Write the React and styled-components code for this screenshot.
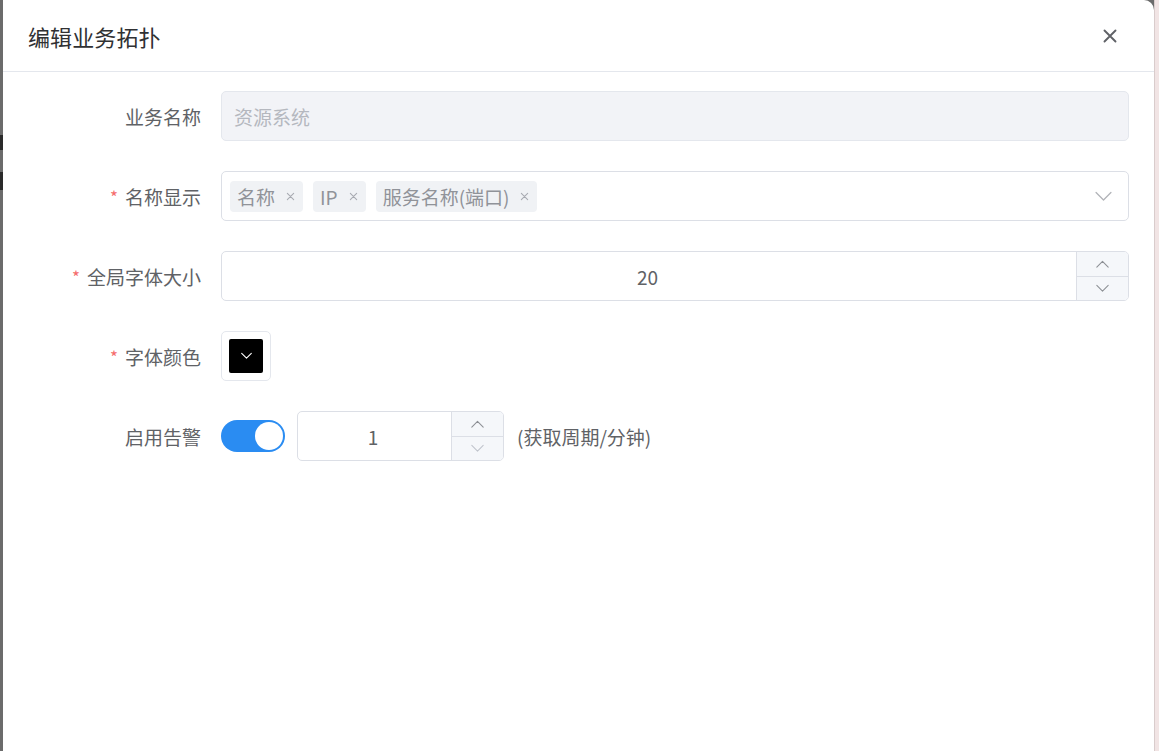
import React from 'react';
import styled, { createGlobalStyle } from 'styled-components';

const GlobalStyle = createGlobalStyle`
  html, body {
    margin: 0;
    padding: 0;
    height: 100%;
    overflow: hidden;
  }
  body {
    font-family: "Noto Sans CJK SC", "Noto Sans", sans-serif;
    background: #6b6b6b;
  }
  #root {
    height: 100%;
  }
`;

const Page = styled.div`
  display: flex;
  height: 751px;
`;

const LeftStrip = styled.div`
  width: 3px;
  flex-shrink: 0;
  background: #6b6b6b;
  display: flex;
  flex-direction: column;
  padding-top: 135px;
  gap: 22px;
`;

const Fragment = styled.div`
  width: 3px;
  height: ${(p) => p.h}px;
  background: #2a2a2a;
`;

const RightStrip = styled.div`
  width: 4px;
  flex-shrink: 0;
  background: #f1e4e4;
  border-left: 1px solid #d9cccc;
`;

const Dialog = styled.div`
  flex: 1;
  background: #fff;
  border-top-right-radius: 10px;
  display: flex;
  flex-direction: column;
`;

const Header = styled.div`
  height: 71px;
  border-bottom: 1px solid #e4e7ed;
  display: flex;
  align-items: center;
  justify-content: space-between;
  padding: 0 37px 0 25px;
`;

const Title = styled.span`
  font-size: 22px;
  color: #303133;
  letter-spacing: 0.1px;
`;

const CloseButton = styled.button`
  border: 0;
  background: transparent;
  padding: 0;
  width: 14px;
  height: 14px;
  display: flex;
  cursor: pointer;
`;

const Form = styled.div`
  display: grid;
  grid-template-columns: 178px 1fr;
  column-gap: 20px;
  row-gap: 30px;
  padding: 19px 25px 0 20px;
`;

const Label = styled.div`
  height: 50px;
  display: flex;
  align-items: center;
  justify-content: flex-end;
  font-size: 19px;
  color: #606266;
  white-space: nowrap;
`;

const Star = styled.span`
  color: #f56c6c;
  margin-right: 7px;
  font-size: 17px;
`;

const Field = styled.div`
  height: 50px;
  display: flex;
  align-items: center;
  gap: 12px;
`;

const TextInput = styled.div`
  flex: 1;
  height: 50px;
  box-sizing: border-box;
  border: 1px solid #e4e7ed;
  border-radius: 5px;
  background: #f2f3f7;
  display: flex;
  align-items: center;
  padding: 0 12px;
  font-size: 19px;
  color: #b5b8bf;
`;

const SelectBox = styled.div`
  flex: 1;
  height: 50px;
  box-sizing: border-box;
  border: 1px solid #dcdfe6;
  border-radius: 5px;
  background: #fff;
  display: flex;
  align-items: center;
  padding: 0 16px 0 8px;
  gap: 10px;
`;

const Tag = styled.span`
  height: 31px;
  box-sizing: border-box;
  display: inline-flex;
  align-items: center;
  gap: 11px;
  padding: 0 8px 0 7px;
  background: #f0f2f5;
  border-radius: 4px;
  font-size: 19px;
  color: #909399;
`;

const Spacer = styled.div`
  flex: 1;
`;

const NumberBox = styled.div`
  width: ${(p) => (p.w ? `${p.w}px` : 'auto')};
  flex: ${(p) => (p.w ? '0 0 auto' : '1')};
  height: 50px;
  box-sizing: border-box;
  border: 1px solid #dcdfe6;
  border-radius: 5px;
  background: #fff;
  display: flex;
  overflow: hidden;
`;

const NumberValue = styled.div`
  flex: 1;
  display: flex;
  align-items: center;
  justify-content: center;
  font-size: 19px;
  color: #606266;
  padding-right: 3px;
`;

const Controls = styled.div`
  width: 51px;
  border-left: 1px solid #dcdfe6;
  background: #f5f7fa;
  display: flex;
  flex-direction: column;
`;

const ControlButton = styled.div`
  flex: 1;
  display: flex;
  align-items: center;
  justify-content: center;
  & + & {
    border-top: 1px solid #dcdfe6;
  }
`;

const ColorPicker = styled.div`
  width: 50px;
  height: 50px;
  box-sizing: border-box;
  border: 1px solid #e4e7ed;
  border-radius: 5px;
  padding: 7px;
`;

const ColorSwatch = styled.div`
  width: 100%;
  height: 100%;
  background: #000;
  border-radius: 2px;
  display: flex;
  align-items: center;
  justify-content: center;
`;

const Switch = styled.div`
  width: 64px;
  height: 32px;
  border-radius: 16px;
  background: #2a8cf2;
  box-sizing: border-box;
  padding: 2px;
  display: flex;
  justify-content: flex-end;
  flex-shrink: 0;
`;

const Knob = styled.div`
  width: 28px;
  height: 28px;
  border-radius: 50%;
  background: #fff;
`;

const Hint = styled.span`
  font-size: 19px;
  color: #606266;
  margin-left: 1px;
`;

const Chevron = ({ dir = 'down', size = 14, color = '#909399', width = 1.3 }) => (
  <svg width={size} height={size / 2 + 2} viewBox="0 0 16 9" fill="none">
    <path
      d={dir === 'down' ? 'M1 1 L8 8 L15 1' : 'M1 8 L8 1 L15 8'}
      stroke={color}
      strokeWidth={width}
      strokeLinecap="round"
      strokeLinejoin="round"
    />
  </svg>
);

const TagClose = () => (
  <svg width="9" height="9" viewBox="0 0 10 10">
    <path d="M1.5 1.5 L8.5 8.5 M8.5 1.5 L1.5 8.5" stroke="#a8abb2" strokeWidth="1.2" strokeLinecap="round" />
  </svg>
);

function NumberInput({ value, width, downDisabled }) {
  return (
    <NumberBox w={width}>
      <NumberValue>{value}</NumberValue>
      <Controls>
        <ControlButton>
          <Chevron dir="up" size={13} color="#8d9095" />
        </ControlButton>
        <ControlButton>
          <Chevron dir="down" size={13} color={downDisabled ? '#c0c4cc' : '#8d9095'} />
        </ControlButton>
      </Controls>
    </NumberBox>
  );
}

export default function App() {
  const tags = ['名称', 'IP', '服务名称(端口)'];
  return (
    <>
      <GlobalStyle />
      <Page>
        <LeftStrip>
          <Fragment h={15} />
          <Fragment h={18} />
        </LeftStrip>
        <Dialog>
          <Header>
            <Title>编辑业务拓扑</Title>
            <CloseButton aria-label="关闭">
              <svg width="14" height="14" viewBox="0 0 14 14">
                <path d="M1.5 1.5 L12.5 12.5 M12.5 1.5 L1.5 12.5" stroke="#5f6166" strokeWidth="1.9" strokeLinecap="round" />
              </svg>
            </CloseButton>
          </Header>
          <Form>
            <Label>业务名称</Label>
            <Field>
              <TextInput>资源系统</TextInput>
            </Field>

            <Label>
              <Star>*</Star>名称显示
            </Label>
            <Field>
              <SelectBox>
                {tags.map((t) => (
                  <Tag key={t}>
                    {t}
                    <TagClose />
                  </Tag>
                ))}
                <Spacer />
                <Chevron dir="down" size={17} color="#b1b3b8" width={1.2} />
              </SelectBox>
            </Field>

            <Label>
              <Star>*</Star>全局字体大小
            </Label>
            <Field>
              <NumberInput value="20" />
            </Field>

            <Label>
              <Star>*</Star>字体颜色
            </Label>
            <Field>
              <ColorPicker>
                <ColorSwatch>
                  <Chevron dir="down" size={11} color="#ffffff" width={1.6} />
                </ColorSwatch>
              </ColorPicker>
            </Field>

            <Label>启用告警</Label>
            <Field>
              <Switch>
                <Knob />
              </Switch>
              <NumberInput value="1" width={207} downDisabled />
              <Hint>(获取周期/分钟)</Hint>
            </Field>
          </Form>
        </Dialog>
        <RightStrip />
      </Page>
    </>
  );
}
